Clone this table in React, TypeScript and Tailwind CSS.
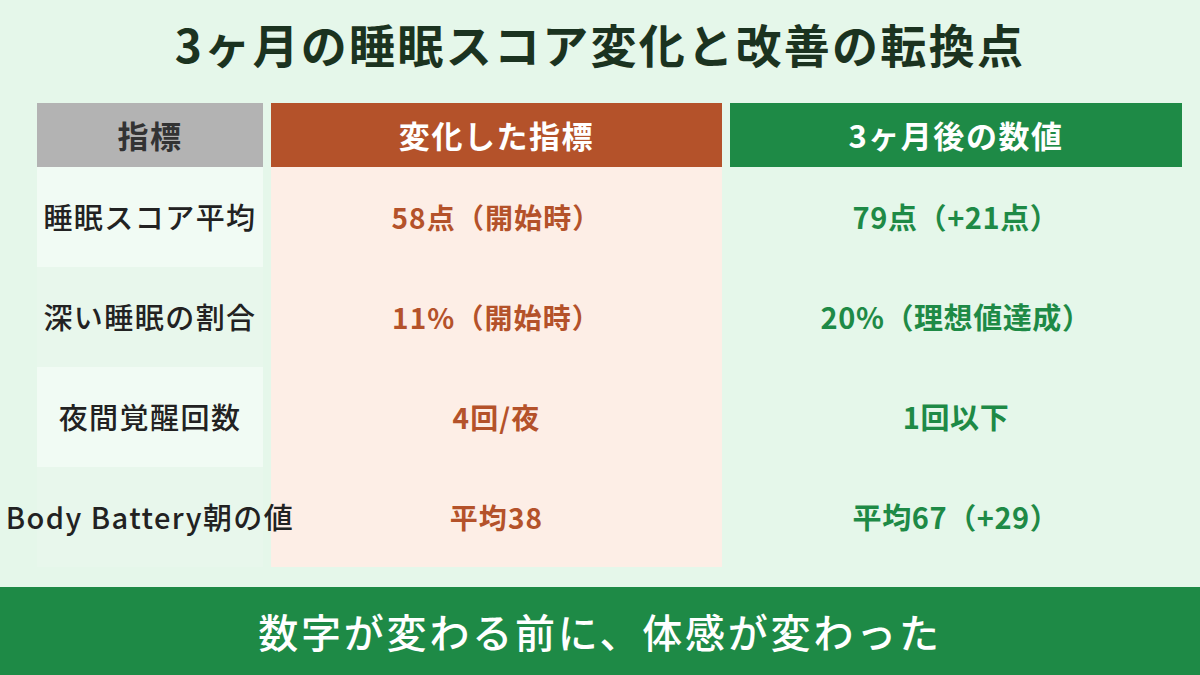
const ROWS = [
  { label: "睡眠スコア平均", before: "58点（開始時）", after: "79点（+21点）" },
  { label: "深い睡眠の割合", before: "11%（開始時）", after: "20%（理想値達成）" },
  { label: "夜間覚醒回数", before: "4回/夜", after: "1回以下" },
  { label: "Body Battery朝の値", before: "平均38", after: "平均67（+29）" },
];

export default function App() {
  return (
    <div
      className="flex h-[675px] w-[1200px] flex-col overflow-hidden bg-[#e5f7ea]"
      style={{ fontFamily: '"Noto Sans CJK JP", "Noto Sans", sans-serif' }}
    >
      <div className="flex h-[86px] items-center justify-center">
        <h1 className="text-[46px] font-bold leading-none tracking-[0.05em] text-[#1b3320]">
          3ヶ月の睡眠スコア変化と改善の転換点
        </h1>
      </div>

      <div className="mt-[17px] ml-[37px] grid grid-cols-[226px_451px_452px] gap-x-2">
        <div className="flex h-16 items-center justify-center bg-[#b3b3b3] text-[31px] font-bold tracking-[0.05em] text-[#333333]">
          指標
        </div>
        <div className="flex h-16 items-center justify-center bg-[#b4522a] text-[31px] font-bold tracking-[0.05em] text-white">
          変化した指標
        </div>
        <div className="flex h-16 items-center justify-center bg-[#1e8a46] text-[31px] font-bold tracking-[0.05em] text-white">
          3ヶ月後の数値
        </div>

        {ROWS.map((row, i) => (
          <div key={row.label} className="contents">
            <div
              className={
                "relative z-10 flex h-[100px] items-center justify-center whitespace-nowrap text-[29px] font-medium tracking-[0.05em] text-[#222222] " +
                (i % 2 === 0 ? "bg-[#f1fbf4]" : "bg-[#e8f7ec]")
              }
            >
              {row.label}
            </div>
            <div className="flex h-[100px] items-center justify-center bg-[#fdeee6] text-[28px] font-bold tracking-[0.04em] text-[#b4522a]">
              {row.before}
            </div>
            <div className="flex h-[100px] items-center justify-center text-[29px] font-bold tracking-[0.02em] text-[#1e8a46]">
              {row.after}
            </div>
          </div>
        ))}
      </div>

      <div className="mt-5 flex h-[88px] items-center justify-center bg-[#1e8a46]">
        <p className="text-[40px] font-medium leading-none tracking-[0.07em] text-white">
          数字が変わる前に、体感が変わった
        </p>
      </div>
    </div>
  );
}
